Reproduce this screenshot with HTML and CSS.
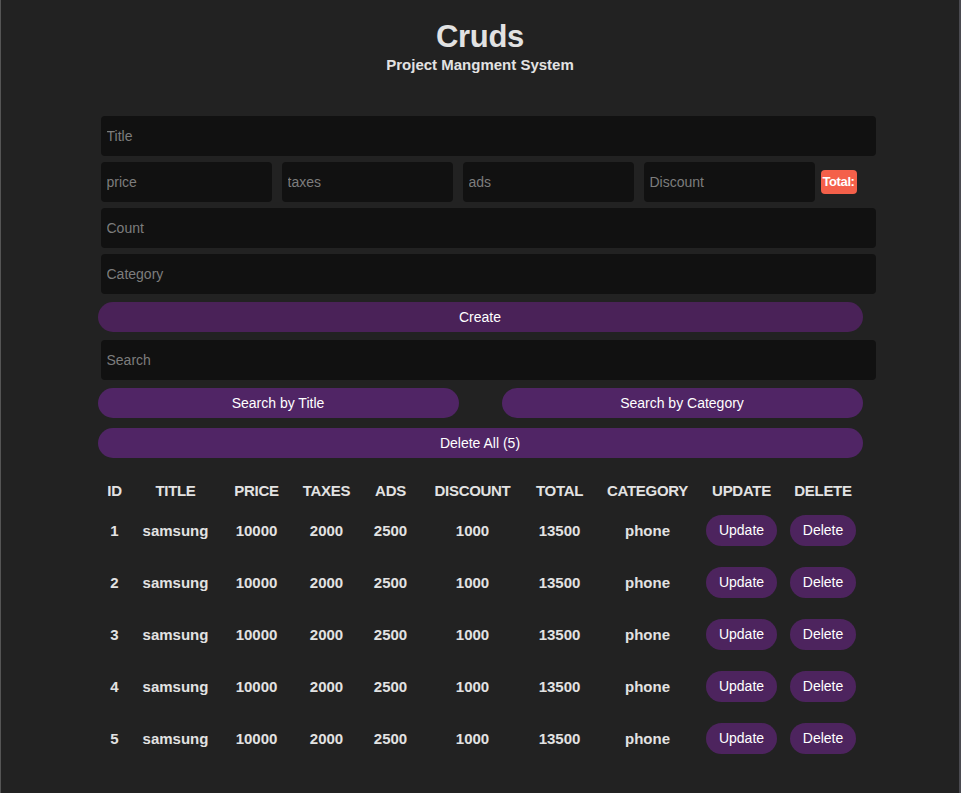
FILE: index.html
```html
<!DOCTYPE html>
<html lang="en">
<head>
<meta charset="utf-8">
<title>Cruds</title>
<link rel="stylesheet" href="styles.css">
</head>
<body>
<div class="crud">
  <header class="head">
    <h2 class="head-title">Cruds</h2>
    <p class="head-sub">Project Mangment System</p>
  </header>
  <div class="inputs">
    <input class="field" type="text" placeholder="Title">
    <div class="price-row">
      <input class="field small" type="text" placeholder="price">
      <input class="field small" type="text" placeholder="taxes">
      <input class="field small" type="text" placeholder="ads">
      <input class="field small" type="text" placeholder="Discount">
      <small class="total">Total:</small>
    </div>
    <input class="field" type="text" placeholder="Count">
    <input class="field" type="text" placeholder="Category">
    <button class="btn btn-create">Create</button>
  </div>
  <div class="search-block">
    <input class="field" type="text" placeholder="Search">
    <div class="search-btns">
      <button class="btn">Search by Title</button>
      <button class="btn">Search by Category</button>
    </div>
  </div>
  <button class="btn btn-delall">Delete All (5)</button>
  <table class="table">
    <colgroup>
      <col style="width:34px"><col style="width:88px"><col style="width:74px"><col style="width:66px"><col style="width:62px"><col style="width:102px"><col style="width:72px"><col style="width:104px"><col style="width:84px"><col style="width:79px">
    </colgroup>
    <thead>
      <tr><th>ID</th><th>TITLE</th><th>PRICE</th><th>TAXES</th><th>ADS</th><th>DISCOUNT</th><th>TOTAL</th><th>CATEGORY</th><th>UPDATE</th><th>DELETE</th></tr>
    </thead>
    <tbody>
      <tr><td>1</td><td>samsung</td><td>10000</td><td>2000</td><td>2500</td><td>1000</td><td>13500</td><td>phone</td><td><button class="pill">Update</button></td><td><button class="pill">Delete</button></td></tr>
      <tr><td>2</td><td>samsung</td><td>10000</td><td>2000</td><td>2500</td><td>1000</td><td>13500</td><td>phone</td><td><button class="pill">Update</button></td><td><button class="pill">Delete</button></td></tr>
      <tr><td>3</td><td>samsung</td><td>10000</td><td>2000</td><td>2500</td><td>1000</td><td>13500</td><td>phone</td><td><button class="pill">Update</button></td><td><button class="pill">Delete</button></td></tr>
      <tr><td>4</td><td>samsung</td><td>10000</td><td>2000</td><td>2500</td><td>1000</td><td>13500</td><td>phone</td><td><button class="pill">Update</button></td><td><button class="pill">Delete</button></td></tr>
      <tr><td>5</td><td>samsung</td><td>10000</td><td>2000</td><td>2500</td><td>1000</td><td>13500</td><td>phone</td><td><button class="pill">Update</button></td><td><button class="pill">Delete</button></td></tr>
    </tbody>
  </table>
</div>
</body>
</html>
```
FILE: styles.css
```css
* { box-sizing: border-box; }
html, body { margin: 0; padding: 0; }
body {
  background: #222222;
  color: #e2e2e2;
  font-family: "Liberation Sans", Arial, sans-serif;
  min-height: 793px;
  border-left: 1px solid #555;
  border-right: 2px solid #4a4a50;
}
.crud {
  width: 765px;
  margin: 0 auto;
}
.head {
  text-align: center;
  padding-top: 20px;
  height: 116px;
}
.head-title {
  margin: 0;
  font-size: 31px;
  line-height: 34px;
  font-weight: 700;
  letter-spacing: -0.3px;
}
.head-sub {
  margin: 2px 0 0;
  font-size: 15px;
  line-height: 18px;
  font-weight: 700;
}
.inputs, .search-block {
  display: flex;
  flex-direction: column;
  gap: 6px;
}
.field {
  display: block;
  width: 775px;
  height: 40px;
  margin-left: 3px;
  background: #111111;
  border: none;
  border-radius: 4px;
  padding: 0 6px;
  color: #ddd;
  font-family: "Liberation Sans", Arial, sans-serif;
  font-size: 14px;
  outline: none;
}
.field::placeholder { color: #7d7d7d; }
.price-row {
  display: flex;
  align-items: center;
  gap: 10px;
}
.field.small {
  width: 171px;
  margin-left: 3px;
}
.field.small + .field.small { margin-left: 0; }
.total {
  background: #f4604a;
  color: #fff;
  font-size: 13px;
  font-weight: 700;
  padding: 0 2px;
  height: 24px;
  line-height: 24px;
  border-radius: 4px;
  margin-left: -4px;
  letter-spacing: -0.4px;
}
.btn {
  display: block;
  width: 765px;
  height: 30px;
  border: none;
  border-radius: 15px;
  background: #502565;
  color: #fff;
  font-family: "Liberation Sans", Arial, sans-serif;
  font-size: 14px;
  cursor: pointer;
}
.btn-create {
  margin-top: 2px;
  margin-bottom: 2px;
  background: #4a2258;
}
.search-block {
  gap: 8px;
  margin-top: 6px;
}
.search-btns {
  display: flex;
  justify-content: space-between;
}
.search-btns .btn { width: 361px; }
.btn-delall { margin-top: 10px; }
.table {
  width: 765px;
  table-layout: fixed;
  border-collapse: collapse;
  margin-top: 18px;
  text-align: center;
  font-weight: 700;
  font-size: 15px;
}
.table th {
  height: 28px;
  font-size: 15px;
  letter-spacing: -0.3px;
}
.table td {
  height: 52px;
  padding: 0;
}
.pill {
  border: none;
  border-radius: 16px;
  background: #4d245e;
  color: #fff;
  font-family: "Liberation Sans", Arial, sans-serif;
  font-size: 14px;
  height: 31px;
  padding: 0 13px;
}
```
